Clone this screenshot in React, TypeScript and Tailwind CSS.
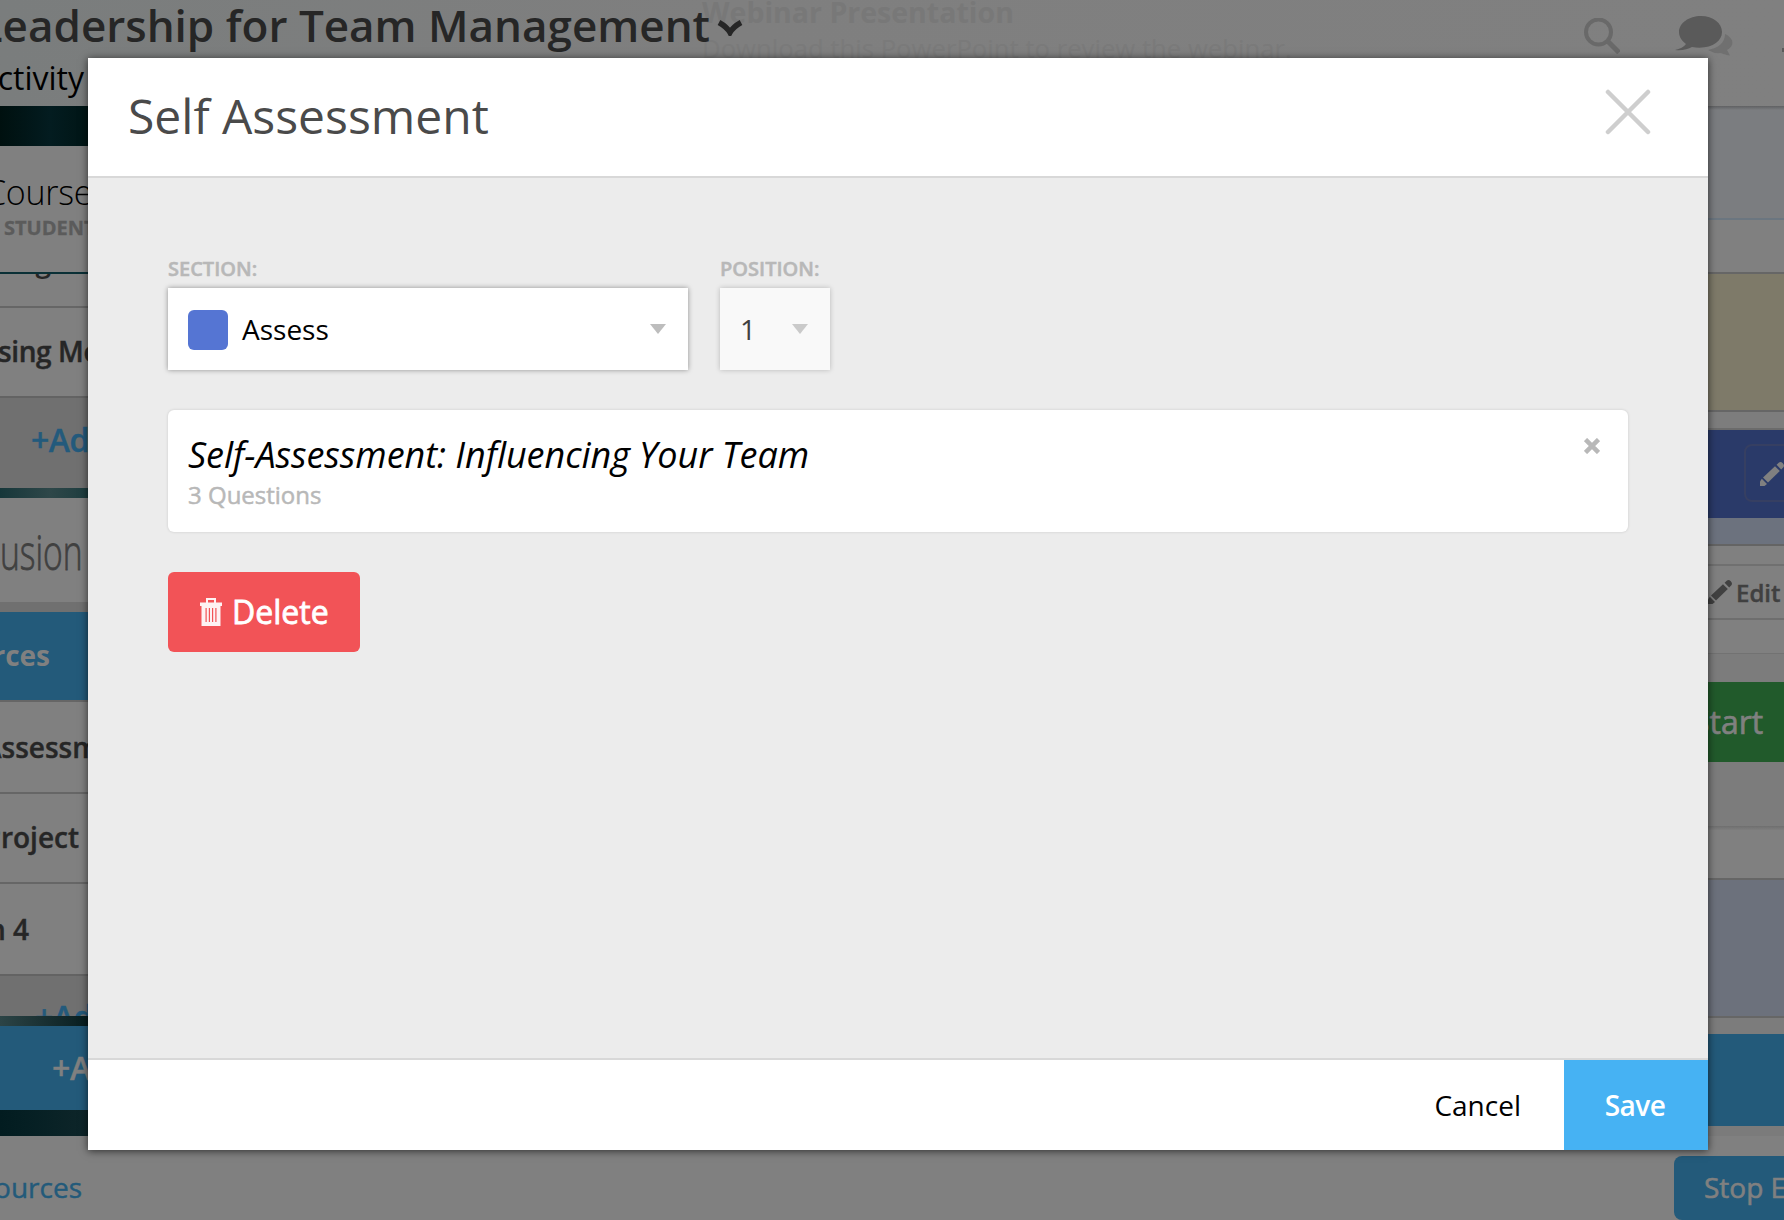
import React from 'react';

type RowProps = { className: string; text?: string; textClass?: string };

/** One horizontal band of the page behind the dialog, with an optional clipped label. */
function Row({ className, text, textClass = '' }: RowProps) {
  return (
    <div className={'flex shrink-0 items-center overflow-hidden whitespace-nowrap ' + className}>
      {text && <span className={'block shrink-0 ' + textClass}>{text}</span>}
    </div>
  );
}

function Pencil({ className }: { className: string }) {
  return (
    <svg viewBox="0 0 24 24" className={'h-6 w-6 shrink-0 ' + className} fill="currentColor">
      <path d="M0 24V19.5L1.8 16.8 7 22 4.5 24Z" />
      <path d="M3 15.6 15 4.2 19.8 9 8 20.6Z" />
      <path d="M16.6 2.8 19 .4Q21 -.6 22.8 1.2T23.6 5L21.2 7.6Z" />
    </svg>
  );
}

function TopBar() {
  return (
    <header className="relative h-[106px] shrink-0 overflow-hidden whitespace-nowrap bg-gradient-to-r from-[#7a7d7d] via-[#7f7f7f] via-40% to-[#808080]">
      <div className="absolute left-[702px] top-[-7px] text-[28.5px] font-bold leading-[38px] text-[#787878]">
        Webinar Presentation
        <div className="pt-[1px] text-[25.7px] font-normal leading-[34px] text-[#7a7a7a]">
          Download this PowerPoint to review the webinar.
        </div>
      </div>
      <div className="relative flex h-[53px] w-[743px] items-center justify-end gap-[7px] text-[44px] font-semibold text-[#262626]">
        <span className="-mt-[3px] leading-[52px]">Leadership for Team Management</span>
        <svg viewBox="0 0 26 16" className="mt-[3px] h-4 w-[26px] shrink-0" fill="none" stroke="currentColor" strokeWidth="5.5">
          <path d="M2 2.5Q10 7 13 12.5Q16 7 24 2.5" />
        </svg>
      </div>
      <div className="relative flex h-[50px] w-[84px] items-center justify-end text-[32px] text-black">
        <span>Activity</span>
      </div>
      <div className="absolute right-0 top-4 flex h-10 w-[200px] items-start text-[#696969]">
        <svg viewBox="0 0 36 36" className="mt-[2px] h-9 w-9" fill="none" stroke="currentColor" strokeWidth="4">
          <circle cx="14.5" cy="14" r="12.5" />
          <path d="M23 22.5 35 34.5" strokeWidth="5" />
        </svg>
        <svg viewBox="0 0 58 40" className="ml-[55px] h-10 w-[58px] shrink-0" fill="currentColor">
          <path d="M50 18C59 22 60 30 52 34L55 39.5C50 39 48 37.500 45 37C40 38 36 35.500 33 34C43 32 50 27 50 18Z" fill="#707070" />
          <path d="M26 0C14 0 4 7 4 16C4 21 7 25 11 28C9 31 5 33 0 34C7 35 13 33 17 31C35 34 47 26 47 16C47 7 38 0 26 0Z" fill="#5a5a5a" />
        </svg>
        <div className="ml-auto mt-8 h-[4px] w-[2px] bg-[#5a5a5a]" />
      </div>
    </header>
  );
}

function LeftColumn() {
  return (
    <div className="flex w-[100px] flex-col overflow-hidden">
      <Row className="h-10 bg-gradient-to-r from-[#00100f] via-[#031c20] to-[#001312]" />
      <div className="flex h-[126px] shrink-0 flex-col overflow-hidden whitespace-nowrap bg-[#808080]">
        <span className="-ml-[15px] mt-[22px] text-[34px] font-light leading-[48px] tracking-[-0.3px] text-black">Course</span>
        <span className="ml-1 mt-[-1px] text-[20px] font-bold leading-[26px] text-[#5b5b5b] [-webkit-text-stroke:0.3px]">STUDENTS</span>
      </div>
      <Row className="h-[2px] bg-[#0a3036]" />
      <div className="flex h-[32px] shrink-0 items-start overflow-hidden bg-[#808080]">
        <span className="-mt-[32px] flex w-[51px] justify-end text-[28px] font-semibold leading-[38px] text-[#262626]">
          Coaching
        </span>
      </div>
      <Row className="h-[2px] bg-[#666666]" />
      <Row
        className="h-[88px] bg-[#808080] pb-[2px]"
        text="sing Modes"
        textClass="-ml-[2px] text-[28px] font-semibold tracking-[-0.4px] text-[#262626] [-webkit-text-stroke:0.4px]"
      />
      <Row className="h-[2px] bg-[#636363]" />
      <Row
        className="h-[90px] bg-[#707070] pb-[6px]"
        text="+Add"
        textClass="ml-[31px] text-[32px] font-semibold tracking-[-0.5px] text-[#235a7c] [-webkit-text-stroke:0.4px]"
      />
      <Row className="h-[10px] bg-gradient-to-r from-[#16373a] via-[#2e4749] to-[#173a3c]" />
      <Row
        className="h-[104px] bg-[#808080] pt-1"
        text="usion"
        textClass="origin-left scale-x-[0.7] text-[48px] font-light text-[#404040] [-webkit-text-stroke:0.8px]"
      />
      <Row className="h-[10px] bg-[#707070]" />
      <Row className="h-[88px] bg-[#235a7a] pb-[2px]" text="rces" textClass="flex w-[50px] justify-end text-[28px] font-bold text-[#808080]" />
      <Row className="h-[2px] bg-[#666666]" />
      <Row
        className="h-[90px] bg-[#808080]"
        text="Assessment"
        textClass="-ml-[17px] text-[28px] font-semibold text-[#262626] [-webkit-text-stroke:0.4px]"
      />
      <Row className="h-[2px] bg-[#666666]" />
      <Row
        className="h-[88px] bg-[#808080] pb-[2px]"
        text="Project"
        textClass="flex w-[79px] justify-end text-[28px] font-semibold text-[#262626] [-webkit-text-stroke:0.4px]"
      />
      <Row className="h-[2px] bg-[#666666]" />
      <Row
        className="h-[90px] bg-[#808080]"
        text="Section 4"
        textClass="flex w-[29px] justify-end text-[28px] font-semibold text-[#262626] [-webkit-text-stroke:0.4px]"
      />
      <Row className="h-[2px] bg-[#636363]" />
      <div className="flex h-10 shrink-0 items-start overflow-hidden bg-[#707070]">
        <span className="ml-[35px] mt-[19px] text-[32px] font-semibold leading-[44px] tracking-[-0.5px] text-[#235a7c] [-webkit-text-stroke:0.4px]">
          +Add
        </span>
      </div>
      <Row className="h-[10px] bg-gradient-to-r from-[#2c4446] to-[#04191b]" />
      <Row
        className="h-[84px] bg-[#235a7a]"
        text="+Add"
        textClass="ml-[52px] text-[32px] font-semibold tracking-[-0.4px] text-[#808080] [-webkit-text-stroke:0.4px]"
      />
      <Row className="h-[26px] bg-gradient-to-r from-[#021c20] to-[#10272b]" />
    </div>
  );
}

function RightColumn() {
  return (
    <div className="flex w-[90px] flex-col overflow-hidden bg-[#808080]">
      <Row className="h-1 bg-gradient-to-b from-[#606163] to-[#7b7d80]" />
      <Row className="h-[108px] bg-[#7b7d80]" />
      <Row className="h-[2px] bg-[#6b7680]" />
      <Row className="h-[52px]" />
      <Row className="h-[2px] bg-[#666666]" />
      <Row className="h-[136px] bg-[#7e7a69]" />
      <Row className="h-[2px] bg-[#666666]" />
      <Row className="h-4 bg-[#7d7d7d]" />
      <Row className="h-[2px] bg-[#6b6b6b]" />
      <div className="flex h-[88px] shrink-0 items-start bg-[#2a3a69] pl-[50px] pt-[14px]">
        <div className="flex h-[58px] w-[60px] shrink-0 items-center rounded-lg border-2 border-[#363f62] pl-[14px] pt-[2px] text-[#808080]">
          <Pencil className="" />
        </div>
      </div>
      <Row className="h-[26px] bg-[#6c727e]" />
      <Row className="h-[2px] bg-[#646464]" />
      <Row className="h-[18px]" />
      <Row className="h-[2px] bg-[#707070]" />
      <div className="flex h-[52px] shrink-0 items-center overflow-hidden pl-[14px] text-[24px] font-semibold text-[#404040]">
        <Pencil className="mr-[4px]" />
        <span className="pt-[2px] [-webkit-text-stroke:0.4px]">Edit</span>
      </div>
      <Row className="h-[2px] bg-[#6e6e6e]" />
      <Row className="h-[33px]" />
      <Row className="h-px bg-[#727272]" />
      <Row className="h-[28px] bg-[#7c7c7c]" />
      <Row className="h-20 bg-[#215a2b]" text="Start" textClass="-ml-[2px] text-[32px] text-[#808080] [-webkit-text-stroke:0.7px]" />
      <Row className="h-[64px] bg-[#7c7c7c]" />
      <Row className="h-1 bg-gradient-to-b from-[#6f6f6f] to-[#7e7e7e]" />
      <Row className="h-[48px]" />
      <Row className="h-[2px] bg-[#666666]" />
      <Row className="h-[136px] bg-[#6c717c]" />
      <Row className="h-[2px] bg-[#666666]" />
      <Row className="h-4 bg-[#7c7c7c]" />
      <Row className="h-[92px] bg-[#235a7a]" />
      <Row className="h-[10px] bg-[#7b7b7b]" />
    </div>
  );
}

function BottomBar() {
  return (
    <footer className="flex h-[84px] shrink-0 items-end justify-between overflow-hidden bg-[#808080]">
      <div className="flex h-[64px] w-[82px] items-center justify-end overflow-hidden pb-[2px] text-[28px] text-[#235a7a] [-webkit-text-stroke:0.4px]">
        <span>Resources</span>
      </div>
      <div className="flex h-[64px] w-[110px] items-center overflow-hidden whitespace-nowrap rounded-l-lg bg-[#235a7a] pb-[2px] pl-[30px] text-[28px] text-[#808080] [-webkit-text-stroke:0.6px]">
        <span>Stop Editing</span>
      </div>
    </footer>
  );
}

function Caret({ className }: { className: string }) {
  return (
    <svg viewBox="0 0 16 10" className={'h-[10px] w-4 shrink-0 ' + className} fill="currentColor">
      <path d="M0 0H16L8 10Z" />
    </svg>
  );
}

function Trash() {
  return (
    <svg viewBox="0 0 22 28" className="h-7 w-[22px] shrink-0" fill="#fff" fillRule="evenodd" opacity="0.93">
      <path d="M0 4.5H6V0H16V4.5H22V8H20.500V28H1.5V8H0ZM8 2V4.5H14V2ZM5.500 10V24H6.700V10ZM8.800 10V24H10V10ZM12 10V24H13.200V10ZM15.300 10V24H16.500V10Z" />
    </svg>
  );
}

function Dialog() {
  return (
    <section className="flex h-[1092px] w-[1620px] flex-col bg-[#ececec] shadow-[0_1px_8px_rgba(0,0,0,0.65)]">
      <div className="flex h-[120px] shrink-0 items-start justify-between border-b-2 border-[#d8d8d8] bg-white pl-10 pr-[57px]">
        <h1 className="mt-[25px] text-[48px] leading-[66px] text-[#4a4a4a]">Self Assessment</h1>
        <svg viewBox="0 0 46 46" className="mt-[31px] h-[46px] w-[46px]" fill="none" stroke="#cecece" strokeWidth="4.5" strokeLinecap="round">
          <path d="M3 3 43 43M43 3 3 43" />
        </svg>
      </div>
      <div className="flex flex-1 flex-col items-start px-20 pt-[77px]">
        <div className="flex gap-8">
          <label className="flex flex-col">
            <span className="text-[20px] font-semibold leading-[28px] text-[#b8b8b8] [-webkit-text-stroke:0.5px]">SECTION:</span>
            <div className="mt-[5px] flex h-[82px] w-[520px] items-center bg-white px-5 pr-[22px] shadow-[0_0_5px_rgba(0,0,0,0.4)]">
              <div className="mt-[2px] h-10 w-10 rounded-md bg-[#5575d3]" />
              <span className="ml-[14px] flex-1 text-[28px] text-black">Assess</span>
              <Caret className="text-[#bdbdbd]" />
            </div>
          </label>
          <label className="flex flex-col">
            <span className="text-[20px] font-semibold leading-[28px] text-[#b8b8b8] [-webkit-text-stroke:0.5px]">POSITION:</span>
            <div className="mt-[5px] flex h-[82px] w-[110px] items-center justify-between bg-[#f9f9f9] pl-5 pr-[22px] shadow-[0_0_5px_rgba(0,0,0,0.22)]">
              <span className="text-[28px] text-[#404040]">1</span>
              <Caret className="text-[#cacaca]" />
            </div>
          </label>
        </div>
        <div className="mt-10 flex h-[122px] w-full items-start justify-between rounded-md bg-white pl-5 pr-7 shadow-[0_0_3px_rgba(0,0,0,0.15)]">
          <div className="flex flex-col pt-[20px]">
            <span className="text-[36px] italic leading-[50px] tracking-[-0.05px] text-black">Self-Assessment: Influencing Your Team</span>
            <span className="text-[24px] leading-[30px] text-[#b8b8b8] [-webkit-text-stroke:0.5px]">3 Questions</span>
          </div>
          <svg viewBox="0 0 16 16" className="mt-7 h-4 w-4" fill="none" stroke="#b8b8b8" strokeWidth="4.5">
            <path d="M1.5 1.5 14.5 14.5M14.5 1.5 1.5 14.5" />
          </svg>
        </div>
        <button className="mt-10 flex h-20 w-[192px] items-center gap-[10px] rounded-md bg-[#f25357] pl-8 text-[32px] text-white [-webkit-text-stroke:0.8px]">
          <Trash />
          <span>Delete</span>
        </button>
      </div>
      <div className="flex h-[92px] shrink-0 flex-col bg-[#d8d8d8] pt-[2px]">
        <div className="flex h-[90px] items-stretch justify-end bg-white text-[28px]">
          <button className="pl-11 pr-[43px] text-black">Cancel</button>
          <button className="w-[144px] bg-[#46b2f3] pr-[2px] font-semibold tracking-[-0.5px] text-white">Save</button>
        </div>
      </div>
    </section>
  );
}

export default function App() {
  return (
    <div className="relative flex h-[1220px] w-[1784px] flex-col overflow-hidden bg-[#808080] font-['Open_Sans',sans-serif]">
      <TopBar />
      <main className="flex h-[1030px] shrink-0 justify-between">
        <LeftColumn />
        <RightColumn />
      </main>
      <BottomBar />
      <div className="absolute inset-0 flex items-start justify-start pl-[88px] pt-[58px]">
        <Dialog />
      </div>
    </div>
  );
}
